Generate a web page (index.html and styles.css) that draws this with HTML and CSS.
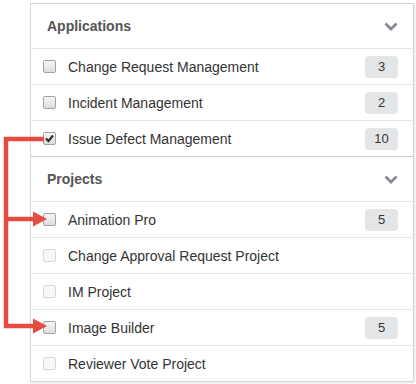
FILE: index.html
```html
<!DOCTYPE html>
<html lang="en">
<head>
<meta charset="UTF-8" />
<meta name="viewport" content="width=device-width, initial-scale=1" />
<title>Filters</title>
<link rel="stylesheet" href="styles.css">
</head>
<body>

<div class="filter-panel">
  <div class="filter-section">
    <div class="section-head">
      <span>Applications</span>
      <svg class="chevron" width="14" height="9" viewBox="0 0 14 9"><polyline points="1.5,1.5 7,7 12.5,1.5" /></svg>
    </div>
    <div class="filter-row">
      <span class="box"></span>
      <span class="name">Change Request Management</span>
      <span class="count">3</span>
    </div>
    <div class="filter-row">
      <span class="box"></span>
      <span class="name">Incident Management</span>
      <span class="count">2</span>
    </div>
    <div class="filter-row">
      <span class="box checked">
        <svg width="11" height="11" viewBox="0 0 11 11"><polyline points="2,5.5 4.5,8 9,2.5" /></svg>
      </span>
      <span class="name">Issue Defect Management</span>
      <span class="count">10</span>
    </div>
  </div>

  <div class="filter-section">
    <div class="section-head">
      <span>Projects</span>
      <svg class="chevron" width="14" height="9" viewBox="0 0 14 9"><polyline points="1.5,1.5 7,7 12.5,1.5" /></svg>
    </div>
    <div class="filter-row">
      <span class="box"></span>
      <span class="name">Animation Pro</span>
      <span class="count">5</span>
    </div>
    <div class="filter-row">
      <span class="box disabled"></span>
      <span class="name">Change Approval Request Project</span>
    </div>
    <div class="filter-row">
      <span class="box disabled"></span>
      <span class="name">IM Project</span>
    </div>
    <div class="filter-row">
      <span class="box"></span>
      <span class="name">Image Builder</span>
      <span class="count">5</span>
    </div>
    <div class="filter-row">
      <span class="box disabled"></span>
      <span class="name">Reviewer Vote Project</span>
    </div>
  </div>
</div>

<!-- annotation arrows drawn over the list -->
<svg class="callout" width="416" height="384" viewBox="0 0 416 384">
  <polyline class="line" points="44,139 6,139 6,326 36,326" />
  <line class="line" x1="6" y1="219" x2="36" y2="219" />
  <polygon class="head" points="33,211.5 47,219 33,226.5" />
  <polygon class="head" points="33,318.5 47,326 33,333.5" />
</svg>

</body>
</html>
```

FILE: styles.css
```css
body {
  margin: 0;
  background: #fff;
  font-family: "Liberation Sans", Arial, sans-serif;
  position: relative;
  width: 416px;
  height: 384px;
  overflow: hidden;
}
.filter-panel {
  margin: 3px 0 0 30px;
  width: 382px;
  border: 1px solid #d6d6d6;
  border-top-color: #cfcfcf;
  box-shadow: 1px 1px 2px rgba(0,0,0,0.12);
  background: #fff;
}
.filter-section {
  border-bottom: 1px solid #cfcfcf;
}
.filter-section:last-child {
  border-bottom: none;
}
.section-head {
  height: 44px;
  display: flex;
  align-items: center;
  justify-content: space-between;
  padding: 0 15px 0 16px;
  border-bottom: 1px solid #e6e6e6;
  font-size: 14px;
  font-weight: bold;
  color: #555;
}
.chevron {
  margin-top: 1px;
}
.chevron polyline {
  fill: none;
  stroke: #868a90;
  stroke-width: 2.8;
}
.filter-row {
  height: 35px;
  display: flex;
  align-items: center;
  padding: 0 15px 0 12px;
  border-bottom: 1px solid #e6e6e6;
  font-size: 14px;
  color: #333;
}
.filter-row:last-child {
  border-bottom: none;
}
.box {
  width: 11px;
  height: 11px;
  border: 1px solid #a3a3a3;
  border-radius: 2px;
  background: linear-gradient(#f6f6f6, #dedede);
  margin-right: 12px;
  display: flex;
  align-items: center;
  justify-content: center;
  flex-shrink: 0;
}
.box.disabled {
  border-color: #d8d8d8;
  background: #f7f7f7;
}
.box.checked polyline {
  fill: none;
  stroke: #333;
  stroke-width: 2.2;
}
.name {
  flex: 1;
}
.count {
  width: 33px;
  height: 22px;
  line-height: 22px;
  text-align: center;
  border-radius: 4px;
  background: #e4e5e7;
  font-size: 13px;
  color: #333;
}
.callout {
  position: absolute;
  top: 0;
  left: 0;
  pointer-events: none;
}
.callout .line {
  fill: none;
  stroke: #e74c42;
  stroke-width: 4.5;
  stroke-linecap: butt;
  stroke-linejoin: miter;
}
.callout .head {
  fill: #e74c42;
}
```
